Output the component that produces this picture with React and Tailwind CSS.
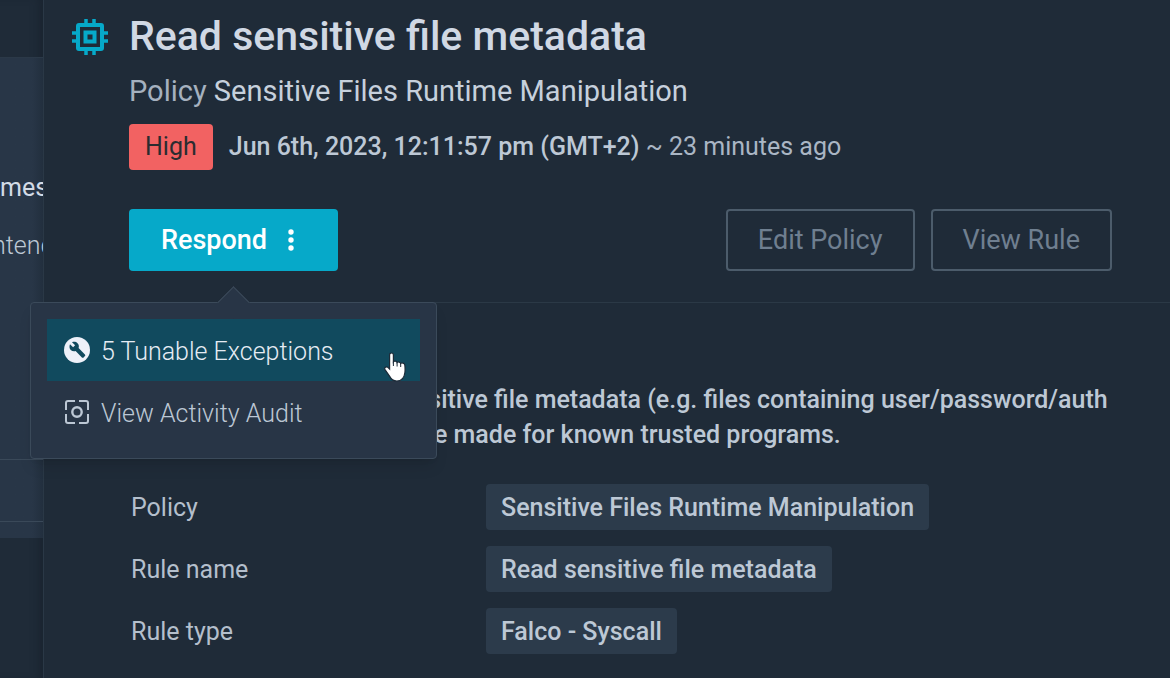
import React from 'react';

const details = [
  { label: 'Policy', value: 'Sensitive Files Runtime Manipulation' },
  { label: 'Rule name', value: 'Read sensitive file metadata' },
  { label: 'Rule type', value: 'Falco - Syscall' },
];

function ChipIcon() {
  return (
    <svg viewBox="0 0 36 36" className="w-9 h-9 text-[#06a9c9]" fill="none" stroke="currentColor" strokeWidth="4" aria-hidden="true">
      <rect x="6" y="6" width="24" height="24" rx="1" />
      <rect x="13.5" y="13.5" width="9" height="9" />
      <path d="M14 0v6M22 0v6M14 30v6M22 30v6M0 14h6M0 22h6M30 14h6M30 22h6" strokeWidth="3.5" />
    </svg>
  );
}

function WrenchIcon() {
  return (
    <svg viewBox="0 0 26 26" className="w-[26px] h-[26px] shrink-0" aria-hidden="true">
      <circle cx="13" cy="13" r="13" fill="#eef1f9" />
      <path
        d="M6 7.2l3.1 3.1 2-2L8 5.2c2-.8 4.200-.4 5.500 1 1.400 1.400 1.700 3.200 1.100 4.900l6.300 6.300c.5.5.5 1.200 0 1.700l-1.300 1.300c-.5.5-1.200.5-1.700 0l-6.300-6.300c-1.700.6-3.500.200-4.900-1.100C5.300 11.500 5.100 9 6 7.200z"
        fill="#114a5e"
      />
    </svg>
  );
}

function AuditIcon() {
  return (
    <svg viewBox="0 0 26 26" className="w-[26px] h-[26px] shrink-0" fill="none" stroke="currentColor" strokeWidth="2" aria-hidden="true">
      <path d="M11 2H4a2 2 0 0 0-2 2v7M15 2H22a2 2 0 0 1 2 2v7M24 15V22a2 2 0 0 1-2 2h-7M11 24H4a2 2 0 0 1-2-2v-7" />
      <circle cx="13" cy="13" r="4.700" strokeWidth="2.400" />
    </svg>
  );
}

function HandCursor() {
  return (
    <svg viewBox="0 0 24 30" className="absolute right-3 top-[33px] w-6 h-[30px]" aria-hidden="true">
      <path
        d="M7.500 1c1.200 0 1.900.8 1.900 1.900v6.800c.6-.9 3.300-.8 3.600.8.700-.8 3.300-.6 3.600 1 .8-.9 4-.5 4.200 1.500.3 2.600.4 5 .1 7.500-.6 5.300-3.400 8.500-8.100 8.500-3.600 0-5.600-1.700-7.300-4.900L1 17.600c-1.100-1.800 1.100-3.600 2.900-2.200l1.700 1.700V2.900C5.600 1.800 6.300 1 7.500 1z"
        fill="#fff"
        stroke="#1d2b38"
        strokeWidth="1.200"
      />
      <path d="M9.400 9.500V14M13.100 10.500V14.500M16.700 11.500V15" stroke="#1d2b38" strokeWidth="1" />
    </svg>
  );
}

function RespondMenu() {
  return (
    <div className="absolute z-10 top-[93px] -left-[99px] w-[407px] h-[157px] p-4 rounded border border-[#3b4a5a] bg-[#283546] shadow-lg font-light">
      <span className="absolute -top-[12px] left-[191px] w-[23px] h-[23px] rotate-45 border-t border-l border-[#3b4a5a] bg-[#283546]" />
      <button className="relative flex items-center gap-[11px] w-full h-[62px] px-[17px] bg-[#114a5e] text-[#e6ecf4]">
        <WrenchIcon />
        <span className="pt-[3px]">5 Tunable Exceptions</span>
        <HandCursor />
      </button>
      <button className="flex items-center gap-[11px] w-full h-[62px] px-[17px] text-[#bcc7d4]">
        <AuditIcon />
        <span className="pt-[3px]">View Activity Audit</span>
      </button>
    </div>
  );
}

export default function App() {
  return (
    <div className="flex min-h-screen overflow-hidden bg-[#1f2b38] font-['Roboto',sans-serif] text-[25px] text-[#bdc8d5]">
      <aside className="w-[43px] shrink-0 overflow-hidden whitespace-nowrap flex flex-col shadow-[inset_-8px_0_8px_-4px_#1a2430]">
        <div className="mt-[57px] h-[402px] pt-28 bg-gradient-to-r from-[#283647] from-75% to-[#222f3e] border-t border-[#2b3948]">
          <p className="h-9 leading-9 text-[#d3dbe6]">mespace</p>
          <p className="h-9 leading-9 mt-[22px] -ml-2 font-light">ntend</p>
        </div>
        <div className="h-[63px] bg-gradient-to-r from-[#283647] from-75% to-[#222f3e] border-y border-[#3a4959]" />
        <div className="h-4 bg-gradient-to-r from-[#283647] from-75% to-[#222f3e]" />
      </aside>

      <main className="flex-1 min-w-0 border-l border-[#2a3846]">
        <header className="pt-3 pb-[31px] pl-[85px] pr-[58px] border-b border-[#2b3946]">
          <div className="relative">
            <div className="absolute -left-[57px] top-[7px]">
              <ChipIcon />
            </div>
            <h1 className="text-[41px] leading-[48px] font-medium text-[#d0d8e4]">Read sensitive file metadata</h1>
          </div>
          <p className="mt-[13px] text-[29px] leading-9 text-[#c6d0dc]">
            <span className="text-[#a5b1bf]">Policy</span> Sensitive Files Runtime Manipulation
          </p>
          <div className="mt-[15px] flex items-center gap-4">
            <span className="h-[46px] px-4 leading-[46px] rounded bg-[#f26262] text-[#2a2c30]">High</span>
            <p className="font-medium">
              Jun 6th, 2023, 12:11:57 pm (GMT+2) <span className="font-normal text-[#aab6c4]">~ 23 minutes ago</span>
            </p>
          </div>
          <div className="relative mt-[39px] flex items-center justify-between">
            <button className="flex items-center gap-[21px] h-[62px] pl-8 pr-11 rounded bg-[#06a9c9] text-[27px] font-medium text-white">
              Respond
              <svg viewBox="0 0 6 22" className="w-[6px] h-[22px]" fill="currentColor" aria-hidden="true">
                <circle cx="3" cy="3" r="2.700" />
                <circle cx="3" cy="11" r="2.700" />
                <circle cx="3" cy="19" r="2.700" />
              </svg>
            </button>
            <div className="flex gap-4 text-[27px] text-[#6f7f90]">
              <button className="h-[62px] px-[30px] rounded border-2 border-[#4c5c6b]">Edit Policy</button>
              <button className="h-[62px] px-[30px] rounded border-2 border-[#4c5c6b]">View Rule</button>
            </div>
            <RespondMenu />
          </div>
        </header>

        <section className="pt-[79px] pl-[87px] pr-12">
          <p className="leading-[35px] font-medium">
            Detect attempt to read sensitive file metadata (e.g. files containing user/password/auth
            information). Exceptions are made for known trusted programs.
          </p>
          <dl className="mt-8 flex flex-col gap-4">
            {details.map((d) => (
              <div key={d.label} className="flex items-center leading-[48px]">
                <dt className="w-[355px] h-[46px] shrink-0 text-[#b4bfcc]">{d.label}</dt>
                <dd className="h-[46px] px-[15px] rounded bg-[#2c3b4b] font-medium">{d.value}</dd>
              </div>
            ))}
          </dl>
        </section>
      </main>
    </div>
  );
}
